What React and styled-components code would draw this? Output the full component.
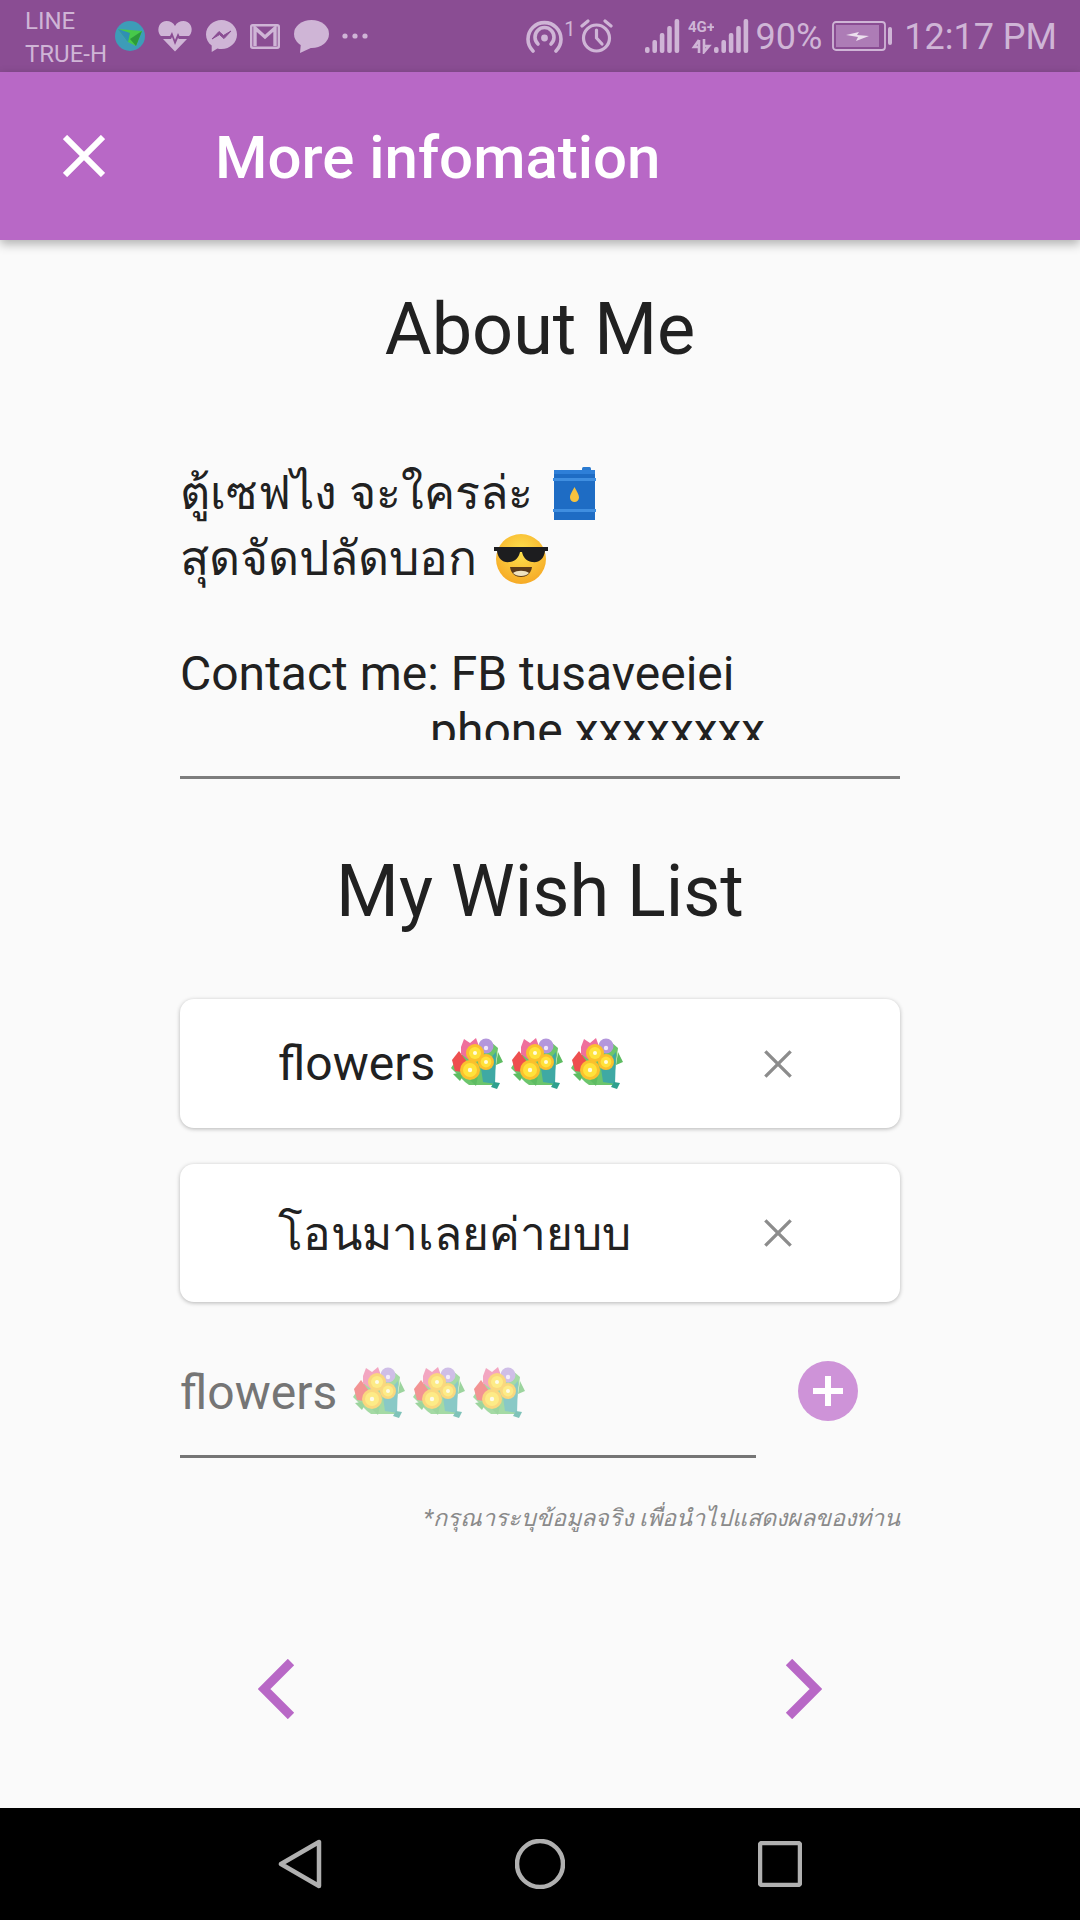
import React from 'react'
import styled, { createGlobalStyle } from 'styled-components'

const GlobalStyle = createGlobalStyle`
  html, body { margin: 0; padding: 0; background: #000; }
  body { font-family: Roboto, 'Noto Sans', 'DejaVu Sans', sans-serif; }
`

const Page = styled.div`
  width: 1080px;
  height: 1920px;
  display: flex;
  flex-direction: column;
  background: #fafafa;
  overflow: hidden;
`
const StatusBar = styled.div`
  height: 72px;
  flex: none;
  background: #8a4d93;
  color: #cfb5d6;
  display: flex;
  align-items: center;
  padding: 0 23px 0 25px;
  box-sizing: border-box;
`
const Carrier = styled.div`
  width: 90px;
  font-size: 24px;
  line-height: 33px;
  margin-top: 4px;
`
const Tray = styled.div`
  display: flex;
  align-items: center;
  gap: 13.4px;
`
const RightTray = styled.div`
  margin-left: auto;
  display: flex;
  align-items: center;
`
const Slot = styled.span`
  display: flex;
  margin-left: ${p => p.$left || 0}px;
`
const StatusText = styled.span`
  font-size: ${p => p.$size || 36}px;
  line-height: 40px;
  white-space: nowrap;
  margin-top: ${p => p.$up ? -14 : 2}px;
`
const AppBar = styled.header`
  height: 168px;
  flex: none;
  background: #b868c6;
  color: #fff;
  display: flex;
  align-items: center;
  padding-left: 63px;
  box-sizing: border-box;
  box-shadow: 0 4px 10px rgba(0, 0, 0, 0.3);
  position: relative;
`
const AppTitle = styled.h1`
  margin: 3px 0 0 110px;
  font-size: 60px;
  font-weight: 500;
`
const Content = styled.main`
  flex: 1;
  display: flex;
  flex-direction: column;
  padding: 0 180px;
`
const Heading = styled.h2`
  margin: ${p => p.$top}px 0 0;
  height: 84px;
  line-height: 84px;
  text-align: center;
  font-size: 72px;
  font-weight: 400;
  color: #212121;
`
const AboutBox = styled.div`
  height: 280px;
  margin-top: 88px;
  overflow: hidden;
  color: #212121;
`
const AboutLine = styled.div`
  height: ${p => p.$h}px;
  line-height: ${p => p.$h}px;
  padding-left: ${p => p.$indent || 0}px;
  font-size: ${p => p.$size || 48}px;
  display: flex;
  align-items: center;
  gap: ${p => p.$gap || 0}px;
  white-space: nowrap;
`
const Divider = styled.div`
  height: 3px;
  margin-top: 36px;
  background: #7d7d7d;
`
const WishCard = styled.div`
  height: ${p => p.$h}px;
  margin-top: ${p => p.$top}px;
  display: flex;
  align-items: center;
  background: #fff;
  border-radius: 14px;
  box-shadow: 0 1px 4px rgba(0, 0, 0, 0.28);
  padding: 0 108px 0 98px;
  font-size: ${p => p.$thai ? 46 : 48}px;
  color: #212121;
`
const WishText = styled.span`
  flex: 1;
  display: flex;
  align-items: center;
  white-space: nowrap;
`
const Flowers = styled.span`
  display: flex;
  gap: 8px;
  margin-left: 16px;
  opacity: ${p => p.$faded ? 0.6 : 1};
`
const InputRow = styled.div`
  margin-top: 38px;
  display: flex;
  align-items: flex-start;
`
const InputField = styled.div`
  width: 576px;
  height: 118px;
  box-sizing: border-box;
  border-bottom: 3px solid #757575;
  display: flex;
  align-items: center;
  padding-bottom: 10px;
  font-size: 48px;
  color: #757575;
  white-space: nowrap;
`
const AddButton = styled.button`
  width: 60px;
  height: 60px;
  margin: 21px 0 0 42px;
  padding: 0;
  border: 0;
  border-radius: 50%;
  background: #ce93d8;
  display: flex;
  align-items: center;
  justify-content: center;
`
const Hint = styled.div`
  margin-top: 41px;
  text-align: right;
  font-size: 23.4px;
  font-style: italic;
  color: #8a8a8a;
`
const Pager = styled.div`
  margin-top: 123px;
  padding: 0 78px;
  display: flex;
  justify-content: space-between;
`
const NavBar = styled.nav`
  height: 112px;
  flex: none;
  background: #000;
  display: flex;
  align-items: center;
  justify-content: space-between;
  padding: 0 278px;
  box-sizing: border-box;
`
const Icon = styled.svg`
  display: block;
  flex: none;
`

const Globe = () => (
  <Icon width="30" height="30" viewBox="0 0 30 30">
    <circle cx="15" cy="15" r="15" fill="#3d9cb8" />
    <path d="M3 8 L27 10 L21 25 L13 21 Z" fill="#47c94a" />
    <path d="M3 8 L15 12 L13 21 Z" fill="#2f8fb4" />
    <path d="M27 10 L15 18 L21 25 Z" fill="#2c9a3a" />
  </Icon>
)
const HeartIcon = () => (
  <Icon width="34" height="32" viewBox="0 0 34 32">
    <path d="M17 6 C14 0 5 -1 1.5 5 C-1 10 1 14 3 16 H12 L14 12 L17 20 L20 13 L21.5 16 H31 C33 14 35 10 32.5 5 C29 -1 20 0 17 6 Z" fill="#cfb5d6" />
    <path d="M5 19 H13 L14 17 L17 25 L20 18 L21 19 H29 L17 31.5 Z" fill="#cfb5d6" />
  </Icon>
)
const MessengerIcon = () => (
  <Icon width="31" height="32" viewBox="0 0 31 32">
    <path d="M15.5 0 C7 0 0 6.5 0 14.5 C0 19 2.2 23 5.7 25.6 V32 L11.4 28.6 C12.7 29 14.1 29.1 15.5 29.1 C24 29.1 31 22.6 31 14.5 C31 6.5 24 0 15.5 0 Z" fill="#cfb5d6" />
    <path d="M6 19 L13 11.5 L17.5 15.5 L25 11 L18 18.6 L13.5 14.6 Z" fill="#8a4d93" stroke="#8a4d93" strokeWidth="1" />
  </Icon>
)
const MailIcon = () => (
  <Icon width="30" height="25" viewBox="0 0 30 25">
    <rect x="1.2" y="1.2" width="27.6" height="22.6" rx="1.5" fill="none" stroke="#cfb5d6" strokeWidth="2.4" />
    <path d="M5 22 V4 L15 13 L25 4 V22" fill="none" stroke="#cfb5d6" strokeWidth="3.4" />
  </Icon>
)
const BubbleIcon = () => (
  <Icon width="35" height="33" viewBox="0 0 35 33">
    <ellipse cx="17.5" cy="14" rx="17.5" ry="14" fill="#cfb5d6" />
    <path d="M7 22 L6 33 L19 27 Z" fill="#cfb5d6" />
  </Icon>
)
const MoreDots = () => (
  <Icon width="26" height="6" viewBox="0 0 26 6">
    <circle cx="3" cy="3" r="2.6" fill="#cfb5d6" />
    <circle cx="13" cy="3" r="2.6" fill="#cfb5d6" />
    <circle cx="23" cy="3" r="2.6" fill="#cfb5d6" />
  </Icon>
)
const HotspotIcon = () => (
  <Icon width="37" height="33" viewBox="0 0 37 33">
    <g fill="none" stroke="#cfb5d6" strokeWidth="3.6" strokeLinecap="round">
      <path d="M7 31 A16.5 16.5 0 1 1 30 31" />
      <path d="M12 24 A9.5 9.5 0 1 1 25 24" />
    </g>
    <circle cx="18.5" cy="18" r="3.4" fill="#cfb5d6" />
  </Icon>
)
const AlarmIcon = () => (
  <Icon width="33" height="34" viewBox="0 0 33 34">
    <g fill="none" stroke="#cfb5d6" strokeWidth="3.2" strokeLinecap="round">
      <circle cx="16.5" cy="19" r="13" />
      <path d="M16.5 11 V19 L22 25" />
      <path d="M2 7 L8 2 M31 7 L25 2" />
    </g>
  </Icon>
)
const Signal = () => (
  <Icon width="35" height="34" viewBox="0 0 35 34">
    {[6, 13, 20, 27, 34].map((h, i) => (
      <rect key={i} x={i * 7.4} y={34 - h} width="4.6" height={h} rx="2" fill="#cfb5d6" />
    ))}
  </Icon>
)
const NetworkIcon = () => (
  <Icon width="26" height="36" viewBox="0 0 26 36">
    <text x="0" y="14" fontSize="15" fontWeight="700" fill="#cfb5d6" fontFamily="Roboto, sans-serif">4G+</text>
    <path d="M11 22 V35 M11 22 L6 29 H11 M16 21 V34 L21 28 H16" fill="none" stroke="#cfb5d6" strokeWidth="2.6" />
  </Icon>
)
const BatteryIcon = () => (
  <Icon width="60" height="30" viewBox="0 0 60 30">
    <rect x="1" y="1" width="52" height="28" rx="3" fill="none" stroke="#cfb5d6" strokeWidth="1.8" />
    <rect x="4" y="4" width="43" height="22" fill="#ad7cb6" />
    <path d="M14 14 L27 11 L25 14 L37 15 L24 20 L26 16 Z" fill="#ece0ee" />
    <rect x="56" y="6" width="4" height="18" rx="2" fill="#cfb5d6" />
  </Icon>
)
const CloseIcon = ({ size, color, weight }) => (
  <Icon width={size} height={size} viewBox="0 0 42 42">
    <path d="M2 2 L40 40 M40 2 L2 40" stroke={color} strokeWidth={weight} />
  </Icon>
)
const Barrel = () => (
  <Icon width="43" height="53" viewBox="0 0 43 53">
    <rect x="29" y="0" width="9" height="5" rx="1.5" fill="#2a7ad0" />
    <rect x="1" y="3" width="41" height="50" fill="#1e6cc4" />
    <rect x="0" y="11" width="43" height="3" fill="#3f8ee0" />
    <rect x="0" y="42" width="43" height="3" fill="#3f8ee0" />
    <rect x="1" y="3" width="41" height="4" fill="#2e7fd8" />
    <path d="M21.5 20 C24 25 26 27.5 26 30.5 A4.5 4.5 0 0 1 17 30.5 C17 27.5 19 25 21.5 20 Z" fill="#f6c23e" />
  </Icon>
)
const CoolFace = () => (
  <Icon width="54" height="50" viewBox="0 0 54 50">
    <defs>
      <radialGradient id="faceFill" cx="50%" cy="35%" r="70%">
        <stop offset="0%" stopColor="#fde14e" />
        <stop offset="100%" stopColor="#f6a623" />
      </radialGradient>
    </defs>
    <ellipse cx="27" cy="25" rx="25" ry="25" fill="url(#faceFill)" />
    <path d="M0 13 H54 V17 H51 C50 25 45 29 38 28 C32 27 29 23 28 18 H26 C25 23 22 27 16 28 C9 29 4 25 3 17 H0 Z" fill="#1d1d1f" />
    <path d="M16 33 H38 C37 40 32 43 27 43 C22 43 17 40 16 33 Z" fill="#5b3a1a" />
    <path d="M19 39 C23 36 31 36 35 39 C32 43 22 43 19 39 Z" fill="#f0e3c0" />
  </Icon>
)
const Bouquet = () => (
  <Icon width="52" height="52" viewBox="0 0 52 52">
    <path d="M14 44 L18 47 L42 47 L47 10 L40 4 L8 18 L0 30 L8 38 Z" fill="#6cc56c" />
    <path d="M30 30 L45 14 L44 46 L32 44 Z" fill="#3fa9a4" />
    <path d="M43 44 L49 45 L46 51 L40 49 Z" fill="#2fa08f" />
    <path d="M47 14 L52 24 L45 27 Z M2 36 L14 34 L9 43 Z M17 40 L27 38 L25 48 Z" fill="#5ebc62" />
    <path d="M10 9 L13 1 L19 5 L25 0 L30 14 L18 22 L10 16 Z" fill="#ef6f9c" />
    <circle cx="35" cy="8" r="7.5" fill="#b497dc" />
    <circle cx="35" cy="10" r="2.2" fill="#f1e6fb" />
    <path d="M1 22 L8 13 L16 24 L11 34 L4 33 Z" fill="#ee4f4f" />
    <g fill="#fbc02d">
      <circle cx="24" cy="15" r="9" />
      <circle cx="35" cy="24" r="8" />
      <circle cx="19" cy="32" r="10" />
    </g>
    <g fill="#ffe23b">
      <circle cx="24" cy="15" r="6" />
      <circle cx="35" cy="24" r="5.4" />
      <circle cx="19" cy="32" r="7" />
    </g>
    <g fill="#fffde0">
      <circle cx="24" cy="15" r="2" />
      <circle cx="35" cy="24" r="2" />
      <circle cx="19" cy="32" r="2.2" />
    </g>
  </Icon>
)
const BouquetRow = ({ faded }) => (
  <Flowers $faded={faded}>
    <Bouquet />
    <Bouquet />
    <Bouquet />
  </Flowers>
)
const PlusIcon = () => (
  <Icon width="30" height="30" viewBox="0 0 30 30">
    <path d="M15 0 V30 M0 15 H30" stroke="#fff" strokeWidth="6" />
  </Icon>
)
const Chevron = ({ flip }) => (
  <Icon width="37" height="60" viewBox="0 0 37 60">
    <path d={flip ? 'M4 3 L31 30 L4 57' : 'M33 3 L6 30 L33 57'} fill="none" stroke="#b868c6" strokeWidth="9" />
  </Icon>
)
const BackKey = () => (
  <Icon width="44" height="50" viewBox="0 0 44 50">
    <path d="M41 3 V47 L3 25 Z" fill="none" stroke="#b0b0b0" strokeWidth="4.5" strokeLinejoin="round" />
  </Icon>
)
const HomeKey = () => (
  <Icon width="50" height="50" viewBox="0 0 50 50">
    <circle cx="25" cy="25" r="23" fill="none" stroke="#b0b0b0" strokeWidth="4.5" />
  </Icon>
)
const RecentKey = () => (
  <Icon width="44" height="46" viewBox="0 0 44 46">
    <rect x="2" y="2" width="40" height="42" rx="2" fill="none" stroke="#b0b0b0" strokeWidth="4.5" />
  </Icon>
)

const App = () => (
  <Page>
    <GlobalStyle />
    <StatusBar>
      <Carrier>LINE<br />TRUE-H</Carrier>
      <Tray>
        <Globe />
        <HeartIcon />
        <MessengerIcon />
        <MailIcon />
        <BubbleIcon />
        <MoreDots />
      </Tray>
      <RightTray>
        <Slot><HotspotIcon /></Slot>
        <Slot $left={1}><StatusText $size={20} $up>1</StatusText></Slot>
        <Slot $left={5}><AlarmIcon /></Slot>
        <Slot $left={32}><Signal /></Slot>
        <Slot $left={8}><NetworkIcon /></Slot>
        <Slot $left={0}><Signal /></Slot>
        <Slot $left={6}><StatusText>90%</StatusText></Slot>
        <Slot $left={10}><BatteryIcon /></Slot>
        <Slot $left={12}><StatusText>12:17 PM</StatusText></Slot>
      </RightTray>
    </StatusBar>
    <AppBar>
      <CloseIcon size={42} color="#fff" weight={6} />
      <AppTitle>More infomation</AppTitle>
    </AppBar>
    <Content>
      <Heading $top={48}>About Me</Heading>
      <AboutBox>
        <AboutLine $h={66} $size={46.5} $gap={20}>ตู้เซฟไง จะใครล่ะ <Barrel /></AboutLine>
        <AboutLine $h={66} $size={48} $gap={17}>สุดจัดปลัดบอก <CoolFace /></AboutLine>
        <AboutLine $h={53} />
        <AboutLine $h={57}>Contact me: FB tusaveeiei</AboutLine>
        <AboutLine $h={57} $indent={250}>phone xxxxxxxx</AboutLine>
      </AboutBox>
      <Divider />
      <Heading $top={71}>My Wish List</Heading>
      <WishCard $top={65} $h={129}>
        <WishText>flowers <BouquetRow /></WishText>
        <CloseIcon size={28} color="#8c8c8c" weight={5} />
      </WishCard>
      <WishCard $top={36} $h={138} $thai>
        <WishText>โอนมาเลยค่ายบบ</WishText>
        <CloseIcon size={28} color="#8c8c8c" weight={5} />
      </WishCard>
      <InputRow>
        <InputField>flowers <BouquetRow faded /></InputField>
        <AddButton><PlusIcon /></AddButton>
      </InputRow>
      <Hint>*กรุณาระบุข้อมูลจริง เพื่อนำไปแสดงผลของท่าน</Hint>
      <Pager>
        <Chevron />
        <Chevron flip />
      </Pager>
    </Content>
    <NavBar>
      <BackKey />
      <HomeKey />
      <RecentKey />
    </NavBar>
  </Page>
)

export default App
